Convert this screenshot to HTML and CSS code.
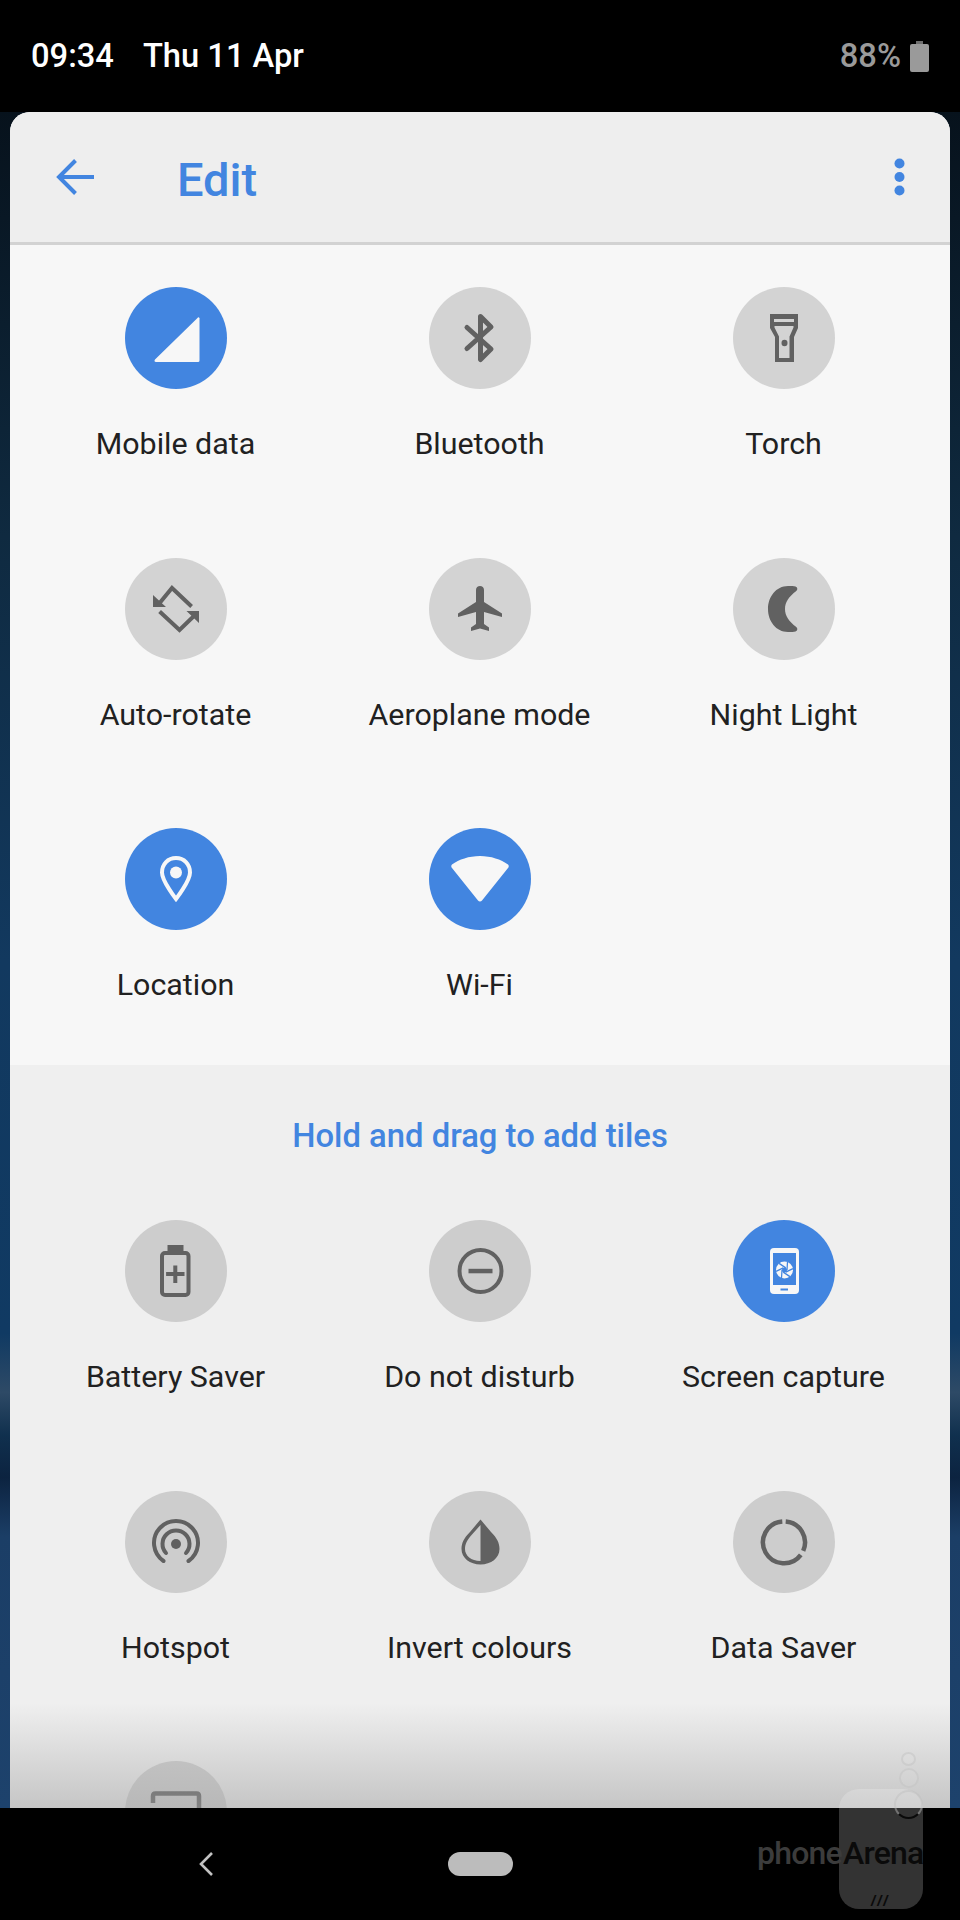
FILE: index.html
```html
<!DOCTYPE html>
<html lang="en">
<head>
<meta charset="utf-8">
<title>Edit</title>
<link rel="stylesheet" href="styles.css">
</head>
<body>
<div class="screen">
  <header class="status">
    <div class="status-left"><span>09:34</span><span>Thu 11 Apr</span></div>
    <div class="status-right"><span>88%</span>
      <svg class="batt" viewBox="0 0 19 31"><path d="M6 0h7v4H6z" fill="#6f6f6f"/><rect y="3" width="19" height="28" rx="2" fill="#9a9a9a"/></svg>
    </div>
  </header>
  <div class="wall">
    <main class="card">
      <div class="toolbar">
        <svg class="back" viewBox="0 0 38 36"><path d="M38 18H4M19.500 1.500 3 18l16.500 16.500" fill="none" stroke="#4285e0" stroke-width="4"/></svg>
        <h1 class="title">Edit</h1>
        <svg class="more" viewBox="0 0 11 38"><circle cx="5.500" cy="5.500" r="5"/><circle cx="5.500" cy="19" r="5"/><circle cx="5.500" cy="32.500" r="5"/></svg>
      </div>
      <section class="active">
        <div class="grid">
          <div class="tile"><span class="disc on"><svg class="ico" viewBox="0 0 48 48"><path d="M45.500 4a1 1 0 0 1 2 1V46.500a1.500 1.500 0 0 1-1.500 1.500H4c-1.500 0-2-1.200-1-2.500z" fill="#f7f7f7"/></svg></span><span class="lbl">Mobile data</span></div>
          <div class="tile"><span class="disc"><svg class="ico" viewBox="0 0 48 48"><path d="M11 13.500 35 35 24.500 45.500V2.500L35 13 11 34.500" fill="none" stroke="#616161" stroke-width="5" stroke-linecap="round" stroke-linejoin="round"/></svg></span><span class="lbl">Bluetooth</span></div>
          <div class="tile"><span class="disc"><svg class="ico" viewBox="0 0 48 48"><path d="M10 0h28v14l-4 9v25H15V23l-5-9z" fill="#616161"/><path d="M14 5h20v3H14zM14.500 12h19v1.500l-4 9V44H19V22.500l-4.500-9z" fill="#d3d3d3"/><ellipse cx="24.500" cy="29" rx="3" ry="3.300" fill="#616161"/></svg></span><span class="lbl">Torch</span></div>

          <div class="tile"><span class="disc"><svg class="ico" viewBox="0 0 48 48"><path d="M6 20 20 3 39.600 21.500M7.600 26.500 27.500 45 43 30" fill="none" stroke="#616161" stroke-width="4"/><path d="M1 10v12h13zM47 26H34.500L47 38z" fill="#616161"/></svg></span><span class="lbl">Auto-rotate</span></div>
          <div class="tile"><span class="disc"><svg class="ico" viewBox="0 0 48 48"><path d="M46 32v-3.500L28 17V5c0-2.500-1.800-4-4-4s-4 1.500-4 4v12L2 28.500V32l18-5v12l-5 3.500V46l9-2.500 9 2.500v-3.500L28 39V27z" fill="#616161"/></svg></span><span class="lbl">Aeroplane mode</span></div>
          <div class="tile"><span class="disc"><svg class="ico" viewBox="0 0 48 48"><path d="M28 1c3 0 6 0 7.500.5 2 .8 2.500 3 .8 4.500C29 11.500 25 17 25 24s4 12.500 11.300 18c1.700 1.500 1.200 3.700-.8 4.500-1.500.5-4.500.5-7.500.5C16 47 8 36 8 24S16 1 28 1z" fill="#616161"/></svg></span><span class="lbl">Night Light</span></div>

          <div class="tile"><span class="disc on"><svg class="ico" viewBox="0 0 48 48"><path d="M24 3c-8 0-14 6-14 14.500C10 26 24 44 24 44s14-18 14-26.500C38 9 32 3 24 3z" fill="none" stroke="#f7f7f7" stroke-width="4"/><circle cx="24" cy="17.500" r="6" fill="#f7f7f7"/></svg></span><span class="lbl">Location</span></div>
          <div class="tile"><span class="disc on"><svg class="ico wide" viewBox="0 0 64 48"><path d="M32 1C21 1 11 4.500 4 9.500 3 10.500 3 12 4 13L30 45.500c1 1.200 3 1.200 4 0L60 13c1-1 1-2.500 0-3.500C53 4.500 43 1 32 1z" fill="#f7f7f7"/></svg></span><span class="lbl">Wi-Fi</span></div>
        </div>
      </section>
      <section class="spare">
        <h2 class="hint">Hold and drag to add tiles</h2>
        <div class="grid">
          <div class="tile"><span class="disc dim"><svg class="ico" viewBox="0 0 48 48"><path d="M15.500-2h16V6h-16z" fill="#616161"/><rect x="10" y="6" width="26.500" height="42" rx="3" fill="none" stroke="#616161" stroke-width="4"/><path d="M21.300 18.500h4V25h7.200v4h-7.200v7h-4v-7h-7.200v-4h7.200z" fill="#616161"/></svg></span><span class="lbl">Battery Saver</span></div>
          <div class="tile"><span class="disc dim"><svg class="ico" viewBox="0 0 48 48"><circle cx="24.500" cy="24" r="21" fill="none" stroke="#616161" stroke-width="4"/><path d="M12.500 21.800h24v4.500h-24z" fill="#616161"/></svg></span><span class="lbl">Do not disturb</span></div>
          <div class="tile"><span class="disc on"><svg class="ico" viewBox="0 0 48 48"><rect x="10" y="1" width="29" height="46" rx="4" fill="#f7f7f7"/><rect x="13" y="6" width="23" height="32" fill="#4285e0"/><rect x="20.500" y="41.500" width="7.500" height="2" fill="#4285e0"/><circle cx="24.500" cy="23" r="8.500" fill="#f7f7f7"/><g fill="none" stroke="#4285e0" stroke-width="1.300"><path d="M27 23l.5-8"/><path d="M27 23l.5-8" transform="rotate(60 24.500 23)"/><path d="M27 23l.5-8" transform="rotate(120 24.500 23)"/><path d="M27 23l.5-8" transform="rotate(180 24.500 23)"/><path d="M27 23l.5-8" transform="rotate(240 24.500 23)"/><path d="M27 23l.5-8" transform="rotate(300 24.500 23)"/></g><circle cx="24.500" cy="23" r="2.500" fill="#4285e0"/></svg></span><span class="lbl">Screen capture</span></div>

          <div class="tile"><span class="disc dim"><svg class="ico" viewBox="0 0 48 48"><path d="M11.500 43A22 22 0 1 1 36.500 43" fill="none" stroke="#616161" stroke-width="4" stroke-linecap="round"/><path d="M14 35A13.500 13.500 0 1 1 34 35" fill="none" stroke="#616161" stroke-width="4" stroke-linecap="round"/><circle cx="24" cy="26" r="5" fill="#616161"/></svg></span><span class="lbl">Hotspot</span></div>
          <div class="tile"><span class="disc dim"><svg class="ico" viewBox="0 0 48 48"><path d="M24.500 1.500 35 14C41 20 43.500 25 43.500 31 43.500 40 35 46.500 24.500 46.500 14 46.500 5.500 40 5.500 31 5.500 25 8 20 14 14z" fill="#616161"/><path d="M24.500 7V43C15 43 9 37.500 9 31 9 26 11 22 16 16.500z" fill="#cdcdcd"/></svg></span><span class="lbl">Invert colours</span></div>
          <div class="tile"><span class="disc dim"><svg class="ico" viewBox="0 0 48 48"><path d="M22.300 3.400A21 21 0 1 0 40.800 36.900M25.700 3.400A21 21 0 0 1 43.200 32.800" fill="none" stroke="#616161" stroke-width="4.500"/></svg></span><span class="lbl">Data Saver</span></div>

          <div class="tile"><span class="disc dim"><svg class="ico" viewBox="0 0 48 48"><path d="M1 15V8Q1 5.500 3.500 5.500H44.500Q47 5.500 47 8V46" fill="none" stroke="#4a4a4a" stroke-width="4.500"/></svg></span></div>
        </div>
      </section>
      <div class="fade"></div>
    </main>
  </div>
  <nav class="navbar">
    <svg class="nav-back" viewBox="0 0 16 26"><path d="M14 2 3 13l11 11" fill="none" stroke="#c2c2c2" stroke-width="2.600"/></svg>
    <span class="pill"></span>
  </nav>
  <div class="mark" aria-hidden="true">
    <span class="mark-body"></span>
    <span class="mark-ring r1"></span>
    <span class="mark-ring r2"></span>
    <span class="mark-ring r3"></span>
    <span class="mark-text"><span class="mark-a">phone</span> <span class="mark-b">Arena</span></span>
    <span class="mark-ticks">///</span>
  </div>
</div>
</body>
</html>
```

FILE: styles.css
```css
* { box-sizing: border-box; }
html, body { margin: 0; padding: 0; background: #000; }
.screen {
  position: relative;
  width: 960px;
  height: 1920px;
  overflow: hidden;
  display: flex;
  flex-direction: column;
  font-family: Roboto, "Noto Sans", sans-serif;
  background: #000;
}
.status {
  flex: 0 0 112px;
  display: flex;
  justify-content: space-between;
  align-items: center;
  padding: 0 31px 0 31px;
  font-size: 32.700px;
  font-weight: 500;
  color: #fff;
}
.status-left { display: flex; gap: 29px; }
.status-right { display: flex; align-items: center; gap: 9px; color: #9a9a9a; }
.batt { width: 19px; height: 31px; display: block; }
.wall {
  flex: 0 0 1696px;
  padding: 0 10px;
  background: linear-gradient(180deg, #07121c 0%, #0f2a40 25%, #12395f 50%, #103a63 72%, #2e4a66 75.5%, #10304e 78%, #0c2340 80.5%, #1b3e66 84%, #1d426c 100%);
  display: flex;
  overflow: hidden;
}
.card {
  position: relative;
  flex: 1;
  border-radius: 20px 20px 0 0;
  overflow: hidden;
  display: flex;
  flex-direction: column;
  background: #f7f7f7;
}
.toolbar {
  flex: 0 0 133px;
  display: flex;
  align-items: center;
  background: #eeeeee;
  border-bottom: 3px solid #d2d2d2;
  padding: 0 45px 0 46px;
}
.back { width: 38px; height: 36px; display: block; flex: none; }
.title {
  margin: 4px 0 0 83px;
  flex: 1;
  font-size: 47px;
  font-weight: 500;
  color: #4285e0;
  line-height: 1;
}
.more { width: 11px; height: 38px; fill: #4285e0; display: block; flex: none; }
.active { padding-top: 42px; flex: 0 0 820px; min-height: 0; background: #f7f7f7; }
.spare { flex: 1; min-height: 0; background: #efefef; }
.hint {
  margin: 0;
  padding-top: 53px;
  height: 155px;
  text-align: center;
  font-size: 32.800px;
  line-height: 36px;
  font-weight: 500;
  color: #4285e0;
}
.grid {
  display: grid;
  grid-template-columns: repeat(3, 304px);
  grid-auto-rows: 270.500px;
  padding-left: 13.500px;
}
.tile {
  display: flex;
  flex-direction: column;
  align-items: center;
}
.disc {
  width: 102px;
  height: 102px;
  border-radius: 50%;
  background: #d3d3d3;
  display: flex;
  align-items: center;
  justify-content: center;
  flex: none;
}
.disc.dim { background: #cdcdcd; }
.disc.on { background: #4285e0; }
.ico { width: 48px; height: 48px; display: block; overflow: visible; }
.ico.wide { width: 64px; }
.lbl {
  margin-top: 38px;
  font-size: 30.400px;
  line-height: 34px;
  color: #212121;
  white-space: nowrap;
}
.fade {
  position: absolute;
  left: 0;
  right: 0;
  bottom: 0;
  height: 105px;
  background: linear-gradient(180deg, rgba(170,170,170,0) 0%, rgba(170,170,170,.6) 100%);
  pointer-events: none;
}
.navbar {
  flex: 0 0 112px;
  background: #000;
  display: flex;
  align-items: center;
  justify-content: center;
  position: relative;
}
.nav-back { position: absolute; left: 198px; top: 43px; width: 16px; height: 26px; }
.pill { width: 65px; height: 24px; border-radius: 12px; background: #bcbcbc; }
.mark { position: absolute; left: 0; top: 0; width: 960px; height: 1920px; pointer-events: none; }
.mark-body {
  position: absolute;
  left: 839px;
  top: 1789px;
  width: 84px;
  height: 120px;
  border-radius: 20px;
  background: rgba(255,255,255,.2);
}
.mark-ring { position: absolute; border-radius: 50%; border: 2px solid rgba(190,190,190,.45); background: rgba(255,255,255,.06); }
.r1 { left: 901px; top: 1752px; width: 15px; height: 14px; }
.r2 { left: 899px; top: 1768px; width: 20px; height: 20px; }
.r3 {
  left: 894px;
  top: 1790px;
  width: 29px;
  height: 29px;
  background: none;
  border-bottom-color: #0a0a0a;
}
.mark-text {
  position: absolute;
  left: 757px;
  top: 1835px;
  font-family: Roboto, sans-serif;
  font-size: 32px;
  line-height: 36px;
  font-weight: 500;
  letter-spacing: -.8px;
  word-spacing: -6px;
  white-space: nowrap;
}
.mark-a { color: #3c3c3c; }
.mark-b { color: #0a0a0a; }
.mark-ticks {
  position: absolute;
  left: 871px;
  top: 1893px;
  font: italic 700 15px/15px "Liberation Sans", sans-serif;
  letter-spacing: 2px;
  color: #0a0a0a;
}
```
